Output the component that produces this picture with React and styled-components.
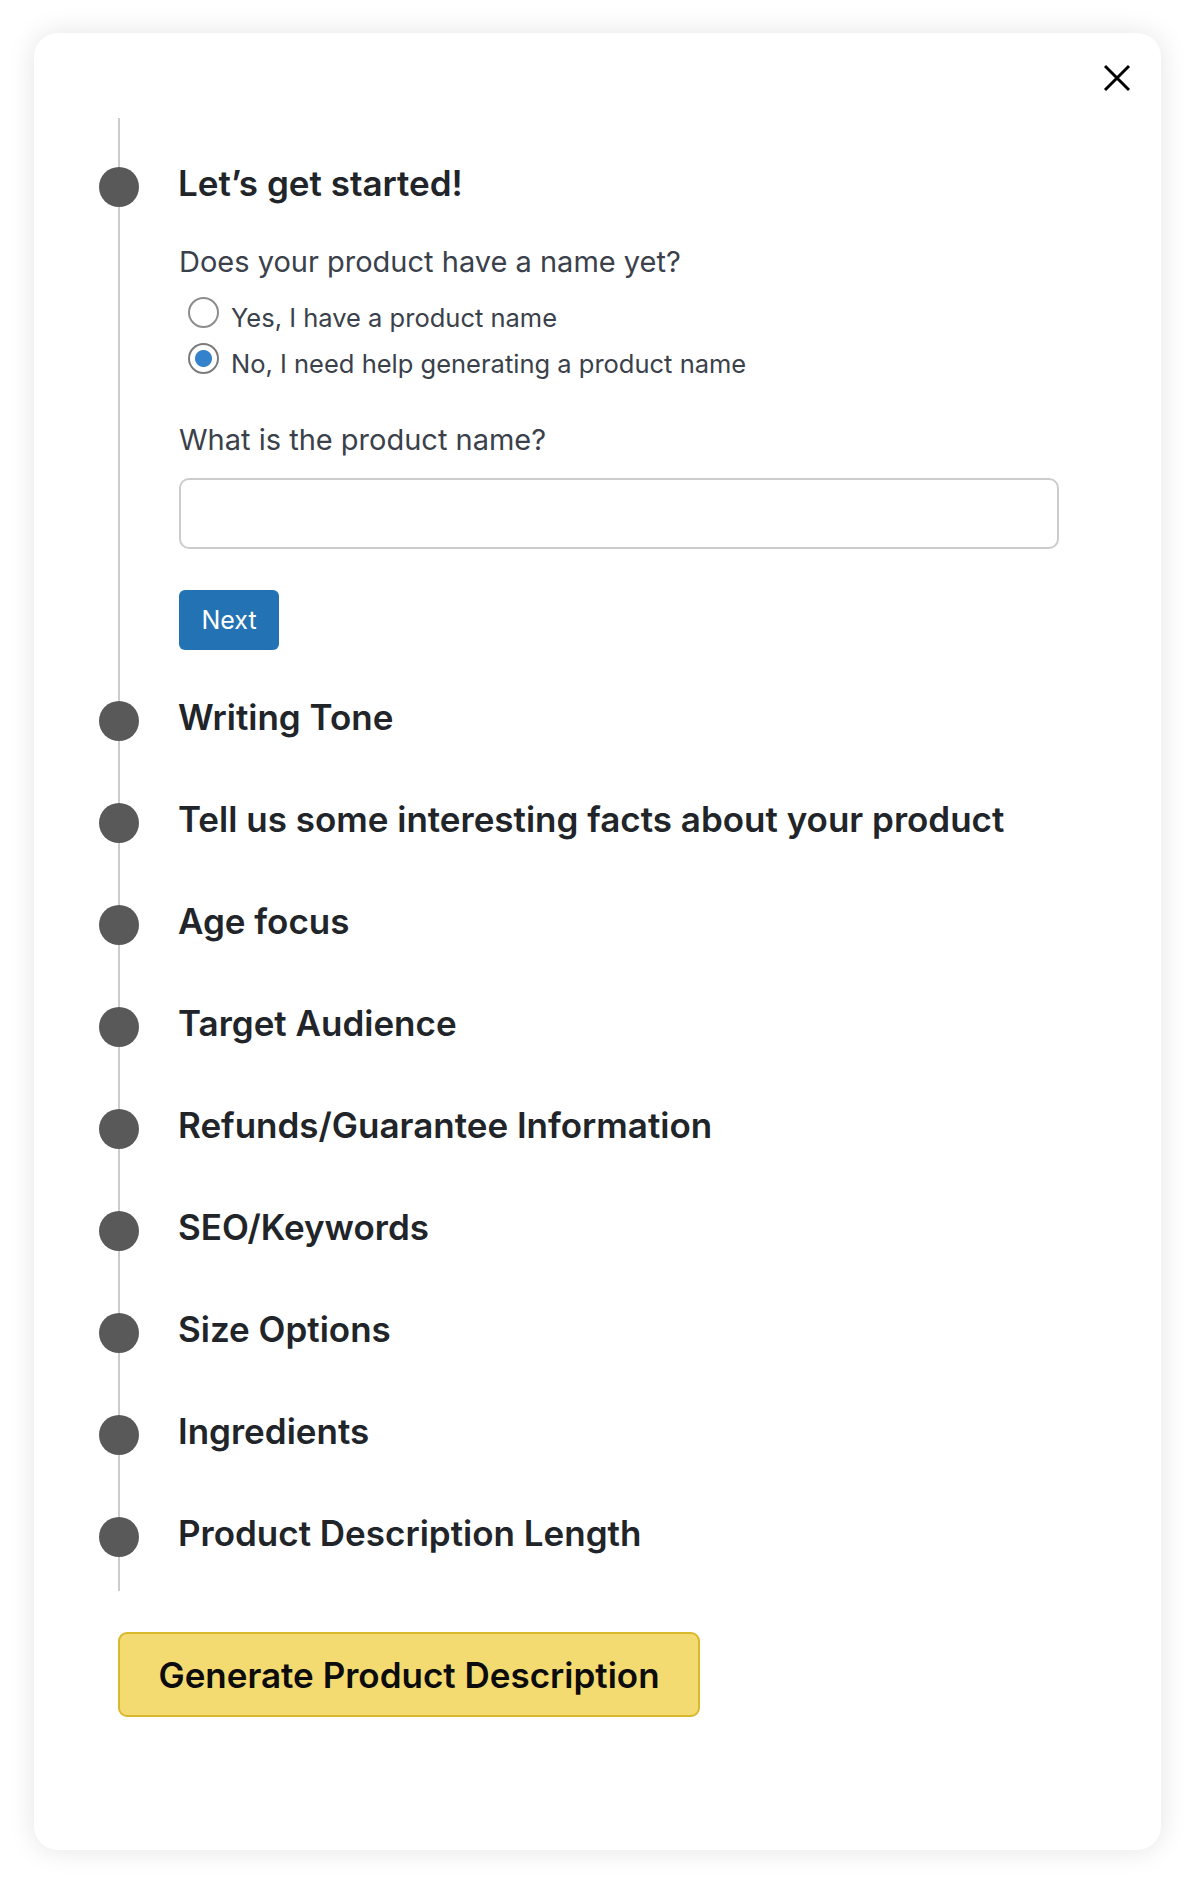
import React, { useState } from 'react';
import styled, { createGlobalStyle } from 'styled-components';

const GlobalStyle = createGlobalStyle`
  * {
    box-sizing: border-box;
  }

  body {
    margin: 0;
    background: #ffffff;
    font-family: Inter, "Noto Sans", "Liberation Sans", sans-serif;
    -webkit-font-smoothing: antialiased;
  }
`;

const Page = styled.div`
  padding: 33px 35px 34px 34px;
`;

const Card = styled.div`
  background: #ffffff;
  border-radius: 24px;
  box-shadow: 0 0 28px rgba(0, 0, 0, 0.11);
  padding: 31px 30px 133px 84px;
`;

const CardHeader = styled.div`
  display: flex;
  justify-content: flex-end;
`;

const CloseButton = styled.button`
  display: flex;
  width: 28px;
  height: 28px;
  padding: 0;
  border: none;
  background: none;
  cursor: pointer;
  color: #000000;
`;

const Timeline = styled.div`
  margin-top: 26px;
  border-left: 2px solid #cccccc;
  padding: 44px 0 34px;
`;

const Step = styled.div`
  padding-bottom: ${(p) => (p.$open ? 46 : 57)}px;

  &:last-child {
    padding-bottom: 0;
  }
`;

const StepHeader = styled.div`
  display: flex;
  align-items: flex-start;
`;

const Dot = styled.span`
  flex: none;
  width: 40px;
  height: 40px;
  margin: 5px 39px 0 -21px;
  border-radius: 50%;
  background: #595959;
`;

const StepTitle = styled.h2`
  margin: 0;
  font-size: 35px;
  line-height: 42px;
  font-weight: 600;
  color: #212529;
`;

const StepBody = styled.div`
  width: 880px;
  margin-left: 59px;
`;

const Question = styled.p`
  margin: ${(p) => p.$top}px 0 0;
  font-size: 29px;
  line-height: 36px;
  color: #3a414b;
`;

const RadioGroup = styled.div`
  display: flex;
  flex-direction: column;
  gap: 7px;
  margin: 17px 0 0 9px;
`;

const RadioRow = styled.label`
  display: flex;
  align-items: flex-start;
  gap: 12px;
  cursor: pointer;
`;

const Radio = styled.input.attrs({ type: 'radio' })`
  appearance: none;
  flex: none;
  width: 31px;
  height: 31px;
  margin: 0;
  border: 2px solid #8d8d8d;
  border-radius: 50%;
  background: #ffffff;

  &:checked {
    border-color: #7c7c7c;
    background: radial-gradient(circle, #3482cc 0 8px, #ffffff 9px);
  }
`;

const RadioLabel = styled.span`
  margin-top: 3px;
  font-size: 25.5px;
  line-height: 36px;
  color: #3a414b;
`;

const TextInput = styled.input`
  display: block;
  width: 100%;
  height: 71px;
  margin-top: 20px;
  padding: 0 18px;
  border: 2px solid #cccccc;
  border-radius: 10px;
  font-family: inherit;
  font-size: 25px;
  outline: none;
`;

const NextButton = styled.button`
  display: block;
  width: 100px;
  height: 60px;
  margin-top: 41px;
  border: none;
  border-radius: 6px;
  background: #2372b4;
  color: #ffffff;
  font-family: inherit;
  font-size: 25px;
  cursor: pointer;
`;

const GenerateButton = styled.button`
  display: block;
  width: 582px;
  height: 85px;
  margin-top: 41px;
  padding: 0;
  border: 2px solid #d8b82c;
  border-radius: 9px;
  background: #f3db71;
  color: #0c0c0c;
  font-family: inherit;
  font-size: 35px;
  font-weight: 600;
  cursor: pointer;
`;

const steps = [
  'Writing Tone',
  'Tell us some interesting facts about your product',
  'Age focus',
  'Target Audience',
  'Refunds/Guarantee Information',
  'SEO/Keywords',
  'Size Options',
  'Ingredients',
  'Product Description Length',
];

const CloseIcon = () => (
  <svg width="28" height="28" viewBox="0 0 28 28" fill="none" stroke="currentColor" strokeWidth="3">
    <path d="M2 2 26 26M26 2 2 26" />
  </svg>
);

const App = () => {
  const [hasName, setHasName] = useState('no');

  return (
    <Page>
      <GlobalStyle />
      <Card>
        <CardHeader>
          <CloseButton aria-label="Close">
            <CloseIcon />
          </CloseButton>
        </CardHeader>
        <Timeline>
          <Step $open>
            <StepHeader>
              <Dot />
              <StepTitle>Let’s get started!</StepTitle>
            </StepHeader>
            <StepBody>
              <Question $top={37}>Does your product have a name yet?</Question>
              <RadioGroup>
                <RadioRow>
                  <Radio name="has-name" checked={hasName === 'yes'} onChange={() => setHasName('yes')} />
                  <RadioLabel>Yes, I have a product name</RadioLabel>
                </RadioRow>
                <RadioRow>
                  <Radio name="has-name" checked={hasName === 'no'} onChange={() => setHasName('no')} />
                  <RadioLabel>No, I need help generating a product name</RadioLabel>
                </RadioRow>
              </RadioGroup>
              <Question $top={40}>What is the product name?</Question>
              <TextInput type="text" />
              <NextButton>Next</NextButton>
            </StepBody>
          </Step>
          {steps.map((title) => (
            <Step key={title}>
              <StepHeader>
                <Dot />
                <StepTitle>{title}</StepTitle>
              </StepHeader>
            </Step>
          ))}
        </Timeline>
        <GenerateButton>Generate Product Description</GenerateButton>
      </Card>
    </Page>
  );
};

export default App;
